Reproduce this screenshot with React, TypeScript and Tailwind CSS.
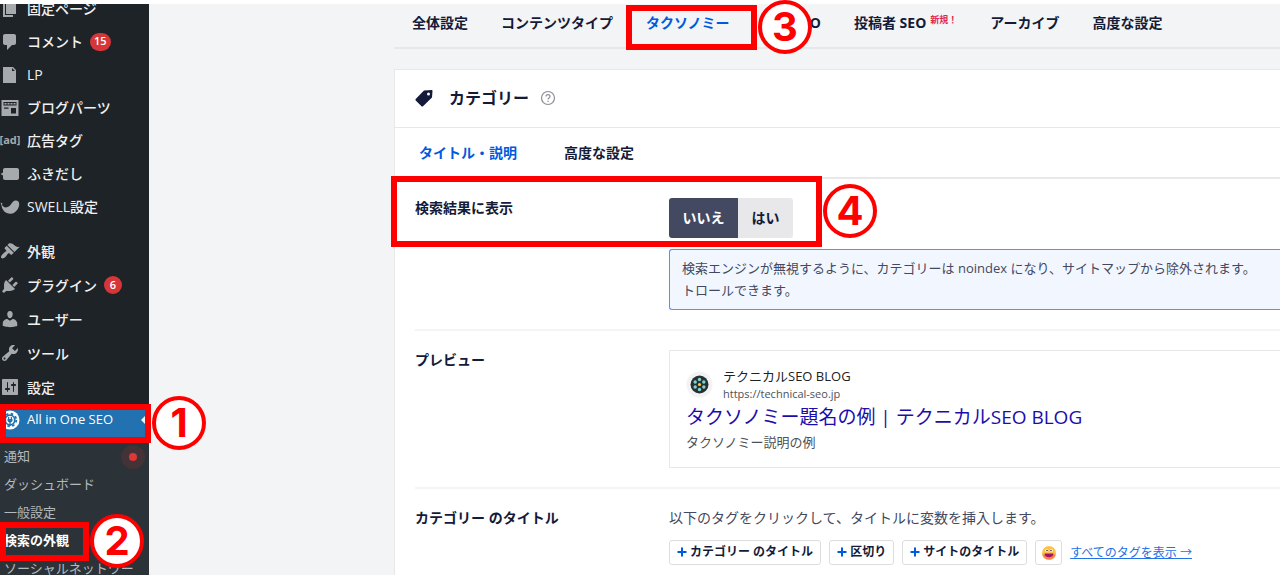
import React from "react";
import clsx from "clsx";

const ICONS: Record<string, React.ReactNode> = {
  pages: (
    <path d="M6 15V2h10v13H6zm-1 1h8v2H3V5h2v11z" />
  ),
  comment: (
    <path d="M5 2h9c1.1 0 2 .9 2 2v7c0 1.1-.9 2-2 2h-2l-5 5v-5H5c-1.1 0-2-.9-2-2V4c0-1.1.9-2 2-2z" />
  ),
  page: <path d="M3 2h10l3 3v13H3V2zm9 1v3h3z" />,
  parts: (
    <path
      fillRule="evenodd"
      d="M1.500 2h17v16h-17zM3.500 4v3.500h13V4zM4.500 5h2v1.500h-2zM7.500 5h2v1.500h-2zM10.500 5h2v1.500h-2zM13.500 5h2v1.500h-2zM4 9.500h4.500v1.200H4zM11 10h5v5.500h-5z"
    />
  ),
  balloon: <path d="M5 4h12c1.100 0 2 .9 2 2v8c0 1.100-.9 2-2 2H5c-1.100 0-2-.9-2-2v-2.500L.5 10 3 8.500V6c0-1.100.9-2 2-2z" />,
  swell: (
    <path d="M.5 5.500 2.500 6.500 2 8c1.500 3 5 3 7.500 1 2-1.800 2.500-4.500 5.500-5.500 2-.5 4 .5 4.200 3 .3 4.500-3.500 10-8.500 10.300-5.500.2-8.700-4-9.200-8.500z" />
  ),
  brush: (
    <path d="M14.480 11.060L7.410 3.990l1.500-1.500c.5-.56 2.300-.47 3.510.32 1.210.8 1.430 1.280 2.910 2.100 1.180.64 2.450 1.260 4.450.85zm-.71.71L6.700 4.700 4.930 6.470c-.39.39-.39 1.020 0 1.410l1.060 1.060c.39.39.39 1.030 0 1.420-.6.6-1.430 1.110-2.210 1.690-.35.26-.7.53-1.010.84C1.430 14.230.4 16.080 1.400 17.070c.99 1 2.840-.03 4.180-1.360.31-.31.58-.66.85-1.020.57-.78 1.080-1.610 1.690-2.210.39-.39 1.020-.39 1.410 0l1.060 1.060c.39.39 1.020.39 1.410 0z" />
  ),
  plug: (
    <path d="M13.110 4.360L9.870 7.600 8 5.730l3.240-3.240c.35-.34 1.050-.2 1.560.32.52.51.66 1.210.31 1.550zm-8 1.770l.91-1.120 9.010 9.010-1.190.84c-.71.71-2.630 1.160-3.820 1.160H6.140L4.900 17.260c-.59.59-1.540.59-2.120 0-.59-.58-.59-1.530 0-2.120l1.240-1.240v-3.880c0-1.130.4-3.190 1.090-3.890zm7.260 3.970l3.240-3.240c.34-.35 1.040-.21 1.550.31.52.51.66 1.210.31 1.550l-3.240 3.250z" />
  ),
  user: (
    <path d="M10 9.250c-2.270 0-2.730-3.440-2.730-3.440C7 4.020 7.820 2 9.970 2c2.160 0 2.980 2.020 2.710 3.810 0 0-.41 3.440-2.680 3.440zm0 2.570L12.720 10c2.390 0 4.520 2.330 4.520 4.530v2.490s-3.650 1.130-7.240 1.130c-3.650 0-7.240-1.130-7.240-1.130v-2.490c0-2.250 1.940-4.480 4.470-4.480z" />
  ),
  wrench: (
    <path d="M16.680 9.770c-1.340 1.340-3.300 1.670-4.950.99l-5.410 6.520c-.99.99-2.590.99-3.580 0s-.99-2.590 0-3.570l6.520-5.420c-.68-1.650-.35-3.610.99-4.950 1.280-1.280 3.120-1.620 4.720-1.060l-2.890 2.890 2.820 2.820 2.860-2.870c.53 1.580.18 3.390-1.080 4.650zM3.810 16.210c.4.39 1.040.39 1.430 0 .4-.4.4-1.040 0-1.430-.39-.4-1.030-.4-1.430 0-.39.39-.39 1.030 0 1.430z" />
  ),
  sliders: (
    <path d="M18 17V3c0-.600-.4-1-1-1H3c-.600 0-1 .4-1 1v14c0 .600.4 1 1 1h14c.600 0 1-.4 1-1zM8 11h1c.55 0 1 .45 1 1s-.45 1-1 1H8v1.500c0 .28-.22.5-.5.5s-.5-.22-.5-.5V13H6c-.55 0-1-.45-1-1s.45-1 1-1h1V5.500c0-.28.22-.5.5-.5s.5.22.5.5V11zm5-2h-1c-.55 0-1-.45-1-1s.45-1 1-1h1V5.500c0-.28.22-.5.5-.5s.5.22.5.5V7h1c.55 0 1 .45 1 1s-.45 1-1 1h-1v5.500c0 .28-.22.5-.5.5s-.5-.22-.5-.5V9z" />
  ),
};

type MenuItem = { label: string; icon: string; count?: number };

const contentMenu: MenuItem[] = [
  { label: "固定ページ", icon: "pages" },
  { label: "コメント", icon: "comment", count: 15 },
  { label: "LP", icon: "page" },
  { label: "ブログパーツ", icon: "parts" },
  { label: "広告タグ", icon: "ad" },
  { label: "ふきだし", icon: "balloon" },
  { label: "SWELL設定", icon: "swell" },
];

const systemMenu: MenuItem[] = [
  { label: "外観", icon: "brush" },
  { label: "プラグイン", icon: "plug", count: 6 },
  { label: "ユーザー", icon: "user" },
  { label: "ツール", icon: "wrench" },
  { label: "設定", icon: "sliders" },
];

const subMenu = ["通知", "ダッシュボード", "一般設定", "検索の外観", "ソーシャルネットワー"];

const navTabs = ["全体設定", "コンテンツタイプ", "タクソノミー", "画像 SEO", "投稿者 SEO", "アーカイブ", "高度な設定"];

function MenuLink({ item, className }: { item: MenuItem; className: string }) {
  return (
    <a href="#" className={clsx("flex items-center gap-[7px] text-[14px] font-medium text-[#f0f0f1]", className)}>
      {item.icon === "ad" ? (
        <span className="flex w-5 justify-center text-[11px] font-bold text-[#a7aaad]">[ad]</span>
      ) : (
        <svg viewBox="0 0 20 20" className="size-5 shrink-0 fill-[#a7aaad]">
          {ICONS[item.icon]}
        </svg>
      )}
      <span>{item.label}</span>
      {item.count && (
        <span className="flex h-[18px] min-w-[18px] items-center justify-center rounded-full bg-[#d63638] px-1 text-[11px] font-semibold text-white">
          {item.count}
        </span>
      )}
    </a>
  );
}

function Sidebar() {
  return (
    <aside className="w-[149px] shrink-0 overflow-hidden whitespace-nowrap bg-[#1d2327]">
      <nav className="-mt-3">
        {contentMenu.map((item) => (
          <MenuLink key={item.label} item={item} className="h-[33px]" />
        ))}
        <div className="h-[11px]" />
        {systemMenu.map((item) => (
          <MenuLink key={item.label} item={item} className="h-[34px]" />
        ))}
        <a href="#" className="flex h-[34px] items-center gap-[7px] bg-[#2271b1] pb-0.5 text-[13px] font-medium text-white">
          <svg viewBox="0 0 20 20" className="size-5 shrink-0">
            <circle cx="10" cy="10" r="9.500" fill="#fff" />
            <g fill="none" stroke="#2271b1">
              <circle cx="10" cy="10" r="6.300" strokeWidth="1.800" strokeDasharray="2.474 2.474" />
              <circle cx="10" cy="10" r="4.800" strokeWidth="1.800" />
              <path d="M8.600 7v2.500M11.400 7v2.500M10 11v5" strokeWidth="1.300" />
            </g>
            <path d="M7.500 9h5v1.500c0 2.500-5 2.500-5 0z" fill="#2271b1" />
          </svg>
          <span>All in One SEO</span>
          <span className="ml-auto border-y-8 border-r-8 border-y-transparent border-r-[#f3f4f5]" />
        </a>
        <ul className="bg-[#2c3338] pt-[5px] text-[13px] text-[#b4b9be]">
          {subMenu.map((label) => (
            <li key={label}>
              <a
                href="#"
                className={clsx("flex h-7 items-center pl-1", label === "検索の外観" && "font-bold text-white")}
              >
                {label}
                {label === "通知" && (
                  <span className="mr-1 ml-auto flex size-6 items-center justify-center rounded-full bg-[#433236]">
                    <span className="size-2 rounded-full bg-[#df3639]" />
                  </span>
                )}
              </a>
            </li>
          ))}
        </ul>
      </nav>
    </aside>
  );
}

function SettingRow({ label, last, children }: { label: string; last?: boolean; children: React.ReactNode }) {
  return (
    <section className={clsx("ml-5 flex py-[19px]", !last && "border-b-2 border-[#f3f4f5]")}>
      <h3 className="w-[254px] shrink-0 text-[14px] leading-5 font-bold">{label}</h3>
      <div className="min-w-0 flex-1">{children}</div>
    </section>
  );
}

function TagButton({ children }: { children: React.ReactNode }) {
  return (
    <button
      type="button"
      className="flex h-[25px] shrink-0 items-center gap-[3px] rounded-[3px] border border-[#dcdde1] px-[7px] pb-px text-[12px] font-bold"
    >
      <svg viewBox="0 0 10 10" className="size-[10px] fill-none stroke-[#005ae0] stroke-2">
        <path d="M5 .5v9M.5 5h9" />
      </svg>
      {children}
    </button>
  );
}

// Red frame around the thing to click
function Frame({ className }: { className: string }) {
  return <div className={clsx("pointer-events-none absolute border-[6px] border-[#ff0000]", className)} />;
}

function StepNumber({ n, className }: { n: number; className: string }) {
  return (
    <div
      className={clsx(
        "absolute flex size-[54px] items-center justify-center rounded-full border-4 border-[#ff0000] bg-white font-['Inter',sans-serif] text-[40px] leading-none font-bold text-[#ff0000]",
        className
      )}
    >
      {n}
    </div>
  );
}

export default function App() {
  return (
    <div className="relative flex h-screen overflow-hidden bg-white pt-1 font-['Open_Sans','Noto_Sans_CJK_JP',sans-serif] text-[#141b38]">
      <Sidebar />

      <main className="min-w-0 flex-1 overflow-hidden bg-[#f3f4f5] pl-[245px]">
        <nav className="flex h-[45px] items-center gap-[33px] border-b-2 border-[#e8e8eb] pb-[7px] pl-[18px] text-[14px] font-bold whitespace-nowrap">
          {navTabs.map((tab) => (
            <a key={tab} href="#" className={clsx("flex", tab === "タクソノミー" && "text-[#005ae0]")}>
              {tab}
              {tab === "投稿者 SEO" && <sup className="top-0 ml-1 text-[9px] leading-4 text-[#df2a4a]">新規！</sup>}
            </a>
          ))}
        </nav>

        <div className="mt-5 h-screen border-t border-l border-[#e8e8eb] bg-white">
          <header className="flex h-[58px] items-center border-b border-[#e8e8eb] pb-0.5 pl-5">
            <svg viewBox="0 0 18 18" className="size-[18px] fill-[#141b38]">
              <path
                fillRule="evenodd"
                d="M9 1.500 16.500 1c.6 0 1 .4 1 1L17 8.500 8 17.300c-.5.4-1 .4-1.500 0L.7 11.500c-.4-.5-.4-1 0-1.500zM13.500 3.500a1.500 1.500 0 1 0 0 3 1.500 1.500 0 0 0 0-3z"
              />
            </svg>
            <h2 className="ml-4 text-[16px] font-bold">カテゴリー</h2>
            <svg viewBox="0 0 16 16" className="ml-[11px] size-4 fill-none stroke-[#8c8f9a]">
              <circle cx="8" cy="8" r="6.500" strokeWidth="1.200" />
              <path d="M6 6.500c0-2.600 4-2.600 4 0C10 8 8 8 8 9.600M8 10.800V12" strokeWidth="1.200" />
            </svg>
          </header>

          <nav className="flex h-[51px] items-center gap-[47px] border-b-2 border-[#e8e8eb] pl-6 text-[14px] font-bold">
            <a href="#" className="text-[#005ae0]">タイトル・説明</a>
            <a href="#">高度な設定</a>
          </nav>

          <SettingRow label="検索結果に表示">
            <div className="flex h-10 w-fit overflow-hidden rounded-[3px] text-[14px] font-bold">
              <button type="button" className="w-[69px] bg-[#434960] pb-0.5 text-white">いいえ</button>
              <button type="button" className="w-[55px] bg-[#e8e8eb] pb-0.5">はい</button>
            </div>
            <p className="mt-[11px] rounded-l-[3px] border border-r-0 border-[#5992ee] bg-[#f2f6fe] pt-[7px] pb-2 pl-3 text-[13px] leading-[22px] whitespace-nowrap text-[#434960]">
              検索エンジンが無視するように、カテゴリーは noindex になり、サイトマップから除外されます。
              <br />
              トロールできます。
            </p>
          </SettingRow>

          <SettingRow label="プレビュー">
            <div className="border-y border-l border-[#e8e8eb] px-4 py-[15px]">
              <div className="flex items-center gap-[10px]">
                <svg viewBox="0 0 27 27" className="size-[27px]">
                  <circle cx="13.500" cy="13.500" r="13" fill="#f1f3f4" />
                  <circle cx="13.500" cy="13.500" r="9" fill="#2b2f33" />
                  <g fill="#7fd6d0">
                    <circle cx="13.500" cy="8.500" r="1.700" />
                    <circle cx="17.800" cy="11" r="1.700" />
                    <circle cx="17.800" cy="16" r="1.700" />
                    <circle cx="13.500" cy="18.500" r="1.700" />
                    <circle cx="9.200" cy="16" r="1.700" />
                    <circle cx="9.200" cy="11" r="1.700" />
                  </g>
                  <circle cx="13.500" cy="13.500" r="1.600" fill="#f2c94c" />
                </svg>
                <div>
                  <div className="text-[13px] leading-5 text-[#202124]">テクニカルSEO BLOG</div>
                  <div className="text-[11px] leading-4 text-[#4d5156]">https://technical-seo.jp</div>
                </div>
              </div>
              <a href="#" className="block text-[19px] leading-[30px] text-[#1a0dab]">
                タクソノミー題名の例 | テクニカルSEO BLOG
              </a>
              <div className="text-[13px] leading-5 text-[#4d5156]">タクソノミー説明の例</div>
            </div>
          </SettingRow>

          <SettingRow label="カテゴリー のタイトル" last>
            <p className="text-[14px] leading-5 text-[#434960]">以下のタグをクリックして、タイトルに変数を挿入します。</p>
            <div className="mt-3 flex items-center gap-2">
              <TagButton>カテゴリー のタイトル</TagButton>
              <TagButton>区切り</TagButton>
              <TagButton>サイトのタイトル</TagButton>
              <button
                type="button"
                aria-label="絵文字"
                className="flex h-[25px] w-[27px] items-center justify-center rounded-[3px] border border-[#dcdde1]"
              >
                <svg viewBox="0 0 14 14" className="size-[14px]">
                  <circle cx="7" cy="7" r="7" fill="#fdc14a" />
                  <path d="M.3 8.500a7 7 0 0 0 13.400 0z" fill="#f7824a" />
                  <path d="M2.500 7.500h9c0 5-9 5-9 0z" fill="#a3126a" />
                  <circle cx="4.800" cy="4.500" r="1.500" fill="#fff" />
                  <circle cx="9.200" cy="4.500" r="1.500" fill="#fff" />
                  <circle cx="5" cy="4.600" r=".8" fill="#333" />
                  <circle cx="9" cy="4.600" r=".8" fill="#333" />
                </svg>
              </button>
              <a href="#" className="text-[12px] text-[#2271e5] underline">すべてのタグを表示 →</a>
            </div>
          </SettingRow>
        </div>
      </main>

      <Frame className="top-[404px] left-0 h-[39px] w-[151px]" />
      <StepNumber n={1} className="top-[396px] left-[152px]" />
      <Frame className="top-[522px] left-0 h-[39px] w-[89px]" />
      <StepNumber n={2} className="top-[514px] left-[90px]" />
      <Frame className="top-[5px] left-[626px] h-[45px] w-[131px]" />
      <StepNumber n={3} className="top-0 left-[758px]" />
      <Frame className="top-[176px] left-[391px] h-[71px] w-[431px]" />
      <StepNumber n={4} className="top-[184px] left-[823px]" />
    </div>
  );
}
